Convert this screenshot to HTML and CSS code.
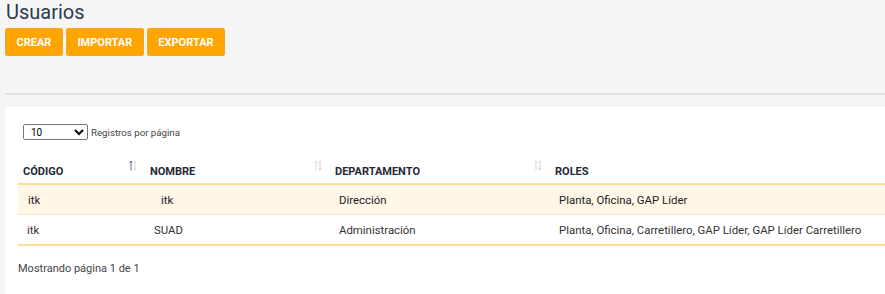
FILE: index.html
```html
<!DOCTYPE html>
<html lang="es">
<head>
    <meta charset="UTF-8">
    <title>Usuarios</title>
    <link rel="stylesheet" href="styles.css">
</head>
<body>
    <div class="page-header">
        <h1>Usuarios</h1>
        <div class="actions">
            <button class="btn">CREAR</button>
            <button class="btn">IMPORTAR</button>
            <button class="btn">EXPORTAR</button>
        </div>
    </div>
    <hr class="divider">

    <div class="card">
        <div class="length">
            <select class="length-select">
                <option>10</option>
                <option>25</option>
                <option>50</option>
            </select>
            <span>Registros por página</span>
        </div>

        <table class="users">
            <thead>
                <tr>
                    <th class="col-code">CÓDIGO
                        <svg class="sort" width="8" height="11" viewBox="0 0 8 11"><path d="M2 10.5V1M0.5 2.5L2 1l1.5 1.5" stroke="#5a6a85" fill="none"/><path d="M6 0.5V10M4.5 8.5L6 10l1.5-1.5" stroke="#cfcfcf" fill="none"/></svg>
                    </th>
                    <th class="col-name">NOMBRE
                        <svg class="sort" width="8" height="11" viewBox="0 0 8 11"><path d="M2 10.5V1M0.5 2.5L2 1l1.5 1.5" stroke="#d6d6d6" fill="none"/><path d="M6 0.5V10M4.5 8.5L6 10l1.5-1.5" stroke="#cfcfcf" fill="none"/></svg>
                    </th>
                    <th class="col-dept">DEPARTAMENTO
                        <svg class="sort" width="8" height="11" viewBox="0 0 8 11"><path d="M2 10.5V1M0.5 2.5L2 1l1.5 1.5" stroke="#d6d6d6" fill="none"/><path d="M6 0.5V10M4.5 8.5L6 10l1.5-1.5" stroke="#cfcfcf" fill="none"/></svg>
                    </th>
                    <th>ROLES</th>
                </tr>
            </thead>
            <tbody>
                <tr class="active">
                    <td class="code-hover">itk</td>
                    <td class="name-hover">itk</td>
                    <td>Dirección</td>
                    <td>Planta, Oficina, GAP Líder</td>
                </tr>
                <tr>
                    <td>itk</td>
                    <td>SUAD</td>
                    <td>Administración</td>
                    <td>Planta, Oficina, Carretillero, GAP Líder, GAP Líder Carretillero</td>
                </tr>
            </tbody>
        </table>

        <p class="info">Mostrando página 1 de 1</p>
    </div>
</body>
</html>
```

FILE: styles.css
```css
body {
    margin: 0;
    background: #f5f5f5;
    font-family: Roboto, "Liberation Sans", sans-serif;
    color: #333;
    overflow: hidden;
}
.page-header {
    padding: 0 5px;
}
h1 {
    margin: 0;
    padding: 0 1px;
    font-size: 20px;
    font-weight: 400;
    line-height: 24px;
    color: #2b3a4a;
}
.actions {
    display: flex;
    gap: 3px;
    margin-top: 4px;
}
.btn {
    height: 28px;
    padding: 0 10.5px;
    background: #ffa500;
    color: #fff;
    border: 1px solid #f7a823;
    border-radius: 2px;
    font-family: Roboto, "Liberation Sans", sans-serif;
    font-size: 11px;
    font-weight: 700;
    cursor: pointer;
}
.divider {
    margin: 37px 0 0 5px;
    border: none;
    border-top: 2px solid #e3e3e3;
}
.card {
    margin: 12px 0 0 5px;
    background: #fff;
    border-radius: 3px 0 0 0;
    padding: 17px 0 0 13px;
    height: 170px;
}
.length {
    display: flex;
    align-items: center;
    gap: 3px;
    padding-left: 5px;
    font-size: 9.7px;
    color: #444;
}
.length-select {
    width: 65px;
    height: 16px;
    padding: 0 3px;
    font-size: 10px;
    font-family: Roboto, "Liberation Sans", sans-serif;
    border: 1px solid #767676;
    border-radius: 2px;
    background: #fff;
}
.users {
    width: 100%;
    margin-top: 17px;
    border-collapse: collapse;
    font-size: 11.4px;
}
.users th {
    position: relative;
    text-align: left;
    padding: 0 5px 5px;
    font-size: 11px;
    font-weight: 700;
    color: #1f2a36;
    height: 21px;
    vertical-align: bottom;
    border-bottom: 2px solid #ffdd99;
}
.col-code { width: 117px; }
.col-name { width: 175px; }
.col-dept { width: 210px; }
.sort {
    position: absolute;
    right: 8px;
    top: 3px;
}
.users td {
    height: 29px;
    padding: 0 9px;
    color: #333;
    white-space: nowrap;
    border-bottom: 1px solid #fde6bf;
}
.users tbody tr:last-child td {
    border-bottom: 2px solid #ffdd99;
}
.users tr.active td {
    background: #fff6e8;
    color: #222;
}
.users td.code-hover {
    padding-left: 10px;
}
.users td.name-hover {
    padding-left: 16px;
}
.info {
    margin: 16px 0 0;
    font-size: 11px;
    color: #444;
}
```
